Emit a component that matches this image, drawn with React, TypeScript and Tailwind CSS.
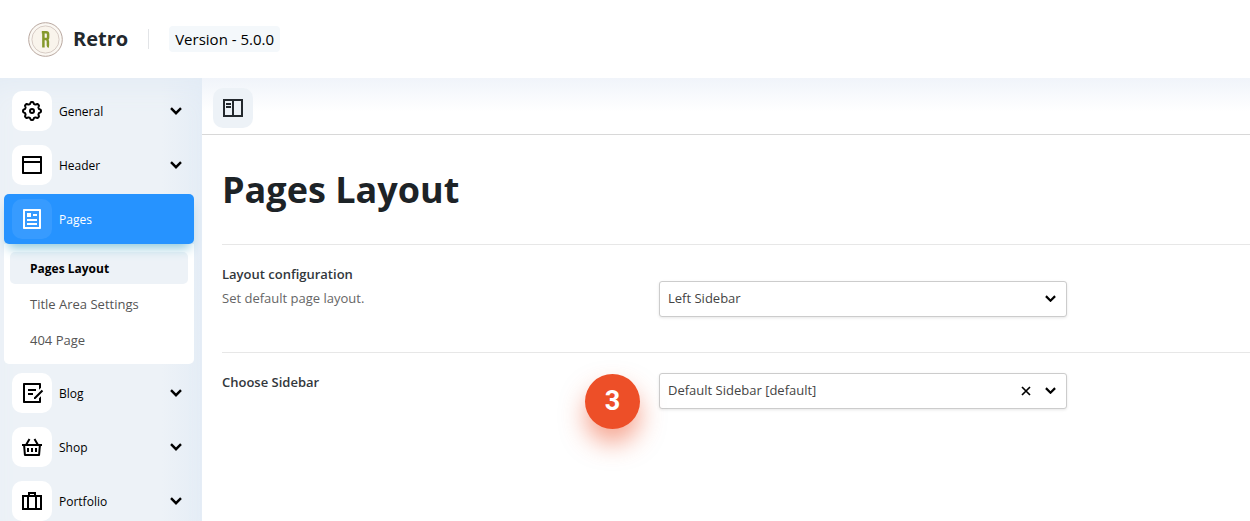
import { useState } from "react";
import type { ReactNode } from "react";
import {
  RiArticleLine,
  RiDraftLine,
  RiLayoutTopLine,
  RiShoppingBasket2Line,
} from "react-icons/ri";

interface IMenuItem {
  title: string;
  icon: ReactNode;
  children?: string[];
}

// closed outline with eight soft teeth
const gearPath = `M${Array.from({ length: 96 }, (_, i) => {
  const angle = (i / 96) * Math.PI * 2;
  const radius = 8.1 + 0.9 * Math.tanh(2 * Math.cos(angle * 8));
  return `${(12 + radius * Math.cos(angle)).toFixed(2)} ${(12 + radius * Math.sin(angle)).toFixed(2)}`;
}).join("L")}Z`;

function GearIcon() {
  return (
    <svg viewBox="0 0 24 24" className="size-6" fill="none" stroke="currentColor" strokeWidth="2" strokeLinejoin="round" aria-hidden="true">
      <path d={gearPath} />
      <circle cx="12" cy="12" r="2" />
    </svg>
  );
}

function SuitcaseIcon() {
  return (
    <svg viewBox="0 0 24 24" className="size-6" fill="none" stroke="currentColor" strokeWidth="2" aria-hidden="true">
      <path d="M3 7h18v13H3zM8 7v13M16 7v13M9 7V4h6v3" />
    </svg>
  );
}

const menu: IMenuItem[] = [
  { title: "General", icon: <GearIcon /> },
  { title: "Header", icon: <RiLayoutTopLine size={24} /> },
  {
    title: "Pages",
    icon: <RiArticleLine size={24} />,
    children: ["Pages Layout", "Title Area Settings", "404 Page"],
  },
  { title: "Blog", icon: <RiDraftLine size={24} /> },
  { title: "Shop", icon: <RiShoppingBasket2Line size={24} /> },
  { title: "Portfolio", icon: <SuitcaseIcon /> },
];

function Chevron({ className }: { className: string }) {
  return (
    <svg viewBox="0 0 12 8" fill="none" stroke="currentColor" strokeWidth="2.4" className={className} aria-hidden="true">
      <path d="M1 1.2 6 6.2l5-5" />
    </svg>
  );
}

function Logo() {
  return (
    <svg viewBox="0 0 35 35" className="size-[35px]" fill="none" aria-hidden="true">
      <circle cx="17.5" cy="17.5" r="16.8" fill="#fbf8f3" stroke="#b9a8a0" strokeWidth="1" />
      <circle cx="17.5" cy="17.5" r="13.6" fill="#f9f4ec" stroke="#d3c6bf" strokeWidth="0.9" />
      <path d="M15.4 25.4V10.2M13.8 10.2h4.4q1.9 0 1.9 1.8v3.4q0 1.6-1.9 1.6h-3M18.4 17.4q1.5.4 1.5 2v4.2q0 1 1 1.2" stroke="#85992c" strokeWidth="2.5" />
    </svg>
  );
}

function PanelIcon() {
  return (
    <svg viewBox="0 0 24 24" className="size-6" fill="none" stroke="currentColor" strokeWidth="2" aria-hidden="true">
      <path d="M3 4h18v16H3zM12 4v16M5 8h5M5 11h5" />
    </svg>
  );
}

function Header() {
  return (
    <header className="flex h-[78px] items-center bg-white px-7">
      <Logo />
      <span className="ml-[10px] text-[20px] font-bold text-[#23282d]">Retro</span>
      <span className="ml-5 h-5 w-px bg-[#e2e4e7]" />
      <span className="ml-5 rounded bg-[#f4f8fb] px-[6px] text-[15px] leading-[26px] text-black">
        Version - 5.0.0
      </span>
    </header>
  );
}

function Sidebar() {
  const [page, setPage] = useState<string>("Pages Layout");

  return (
    <nav className="w-[202px] shrink-0 bg-[#edf2f7] bg-linear-to-l from-[#e5edf6] to-transparent to-20% shadow-[inset_0_20px_30px_-14px_#e2ebf5]">
      <ul className="flex flex-col gap-1 py-2 pr-2 pl-1">
        {menu.map((item) => (
          <li key={item.title}>
            <button
              type="button"
              className={
                item.children
                  ? "relative flex h-[50px] w-full items-center rounded-[5px] bg-[#2693ff] px-2 text-white shadow-[0_8px_12px_-4px_#8cc8dc]"
                  : "flex h-[50px] w-full items-center px-2 text-black"
              }
            >
              <span
                className={
                  item.children
                    ? "flex size-10 items-center justify-center rounded-[10px] bg-white/8"
                    : "flex size-10 items-center justify-center rounded-[10px] bg-white"
                }
              >
                {item.icon}
              </span>
              <span className="ml-[7px] pt-px text-[12px]">{item.title}</span>
              {!item.children && <Chevron className="mr-1 ml-auto w-3" />}
            </button>

            {item.children && (
              <ul className="flex flex-col gap-1 rounded-b-[5px] bg-white px-[6px] py-2">
                {item.children.map((child) => (
                  <li key={child}>
                    <button
                      type="button"
                      onClick={() => setPage(child)}
                      className={
                        page === child
                          ? "h-8 w-full rounded-[5px] bg-[#edf2f7] px-5 pt-px text-left text-[12px] font-bold text-black"
                          : "h-8 w-full px-5 pt-px text-left text-[13px] font-medium text-[#555]"
                      }
                    >
                      {child}
                    </button>
                  </li>
                ))}
              </ul>
            )}
          </li>
        ))}
      </ul>
    </nav>
  );
}

interface IField {
  id: string;
  label: string;
  description?: string;
  options: string[];
  clearable?: boolean;
  badge?: string;
}

function Field({ id, label, description, options, clearable, badge }: IField) {
  const [value, setValue] = useState<string>(options[0]);

  return (
    <div className="flex items-center border-t border-[#e7e7e7] py-5">
      <div className="w-[437px] shrink-0 self-start text-[13px]">
        <label htmlFor={id} className="block leading-[18px] font-semibold text-[#32373c]">{label}</label>
        {description && <p className="mt-[5px] mb-6 leading-5 text-[#666]">{description}</p>}
      </div>
      <div className="relative w-full max-w-[408px]">
        <select
          id={id}
          value={value}
          onChange={(e) => setValue(e.target.value)}
          className="h-9 w-full appearance-none rounded-[3px] border border-[#ccc] bg-white px-2 text-[13px] text-[#444] shadow-[0_1px_3px_#0000001a]"
        >
          {clearable && <option value=""></option>}
          {options.map((option) => (
            <option key={option}>{option}</option>
          ))}
        </select>
        <Chevron className="pointer-events-none absolute top-[14px] right-[11px] w-[11px]" />
        {clearable && (
          <button
            type="button"
            aria-label="Clear"
            onClick={() => setValue("")}
            className="absolute top-[13px] right-9 text-black"
          >
            <svg viewBox="0 0 10 10" className="size-[10px]" stroke="currentColor" strokeWidth="1.7" aria-hidden="true">
              <path d="m1 1 8 8M9 1 1 9" />
            </svg>
          </button>
        )}
        {badge && (
          <span className="absolute top-px -left-[74px] flex size-[55px] items-center justify-center rounded-full bg-[#ed4f28] font-[Roboto,sans-serif] text-[27px] font-bold text-white shadow-[0_14px_24px_#ed4f2880]">
            {badge}
          </span>
        )}
      </div>
    </div>
  );
}

export default function App() {
  return (
    <div className="flex h-screen flex-col overflow-hidden bg-white font-['Open_Sans','Noto_Sans',sans-serif]">
      <Header />
      <div className="flex min-h-0 flex-1 items-stretch">
        <Sidebar />
        <main className="min-w-0 flex-1">
          <div className="border-b border-[#d8d8d8] bg-linear-to-b from-[#f0f4fa] to-white to-60% px-[11px] pt-[10px] pb-[6px]">
            <button
              type="button"
              aria-label="Toggle panel"
              className="flex size-10 items-center justify-center rounded-[10px] bg-[#edf2f7] text-[#23282d]"
            >
              <PanelIcon />
            </button>
          </div>
          <section className="pl-5">
            <h1 className="py-7 text-[36px] leading-[53px] font-bold text-[#1d2327]">Pages Layout</h1>
            <Field
              id="page-layout"
              label="Layout configuration"
              description="Set default page layout."
              options={["Left Sidebar", "Right Sidebar", "No Sidebar"]}
            />
            <Field
              id="page-sidebar"
              label="Choose Sidebar"
              options={["Default Sidebar [default]"]}
              clearable
              badge="3"
            />
          </section>
        </main>
      </div>
    </div>
  );
}
